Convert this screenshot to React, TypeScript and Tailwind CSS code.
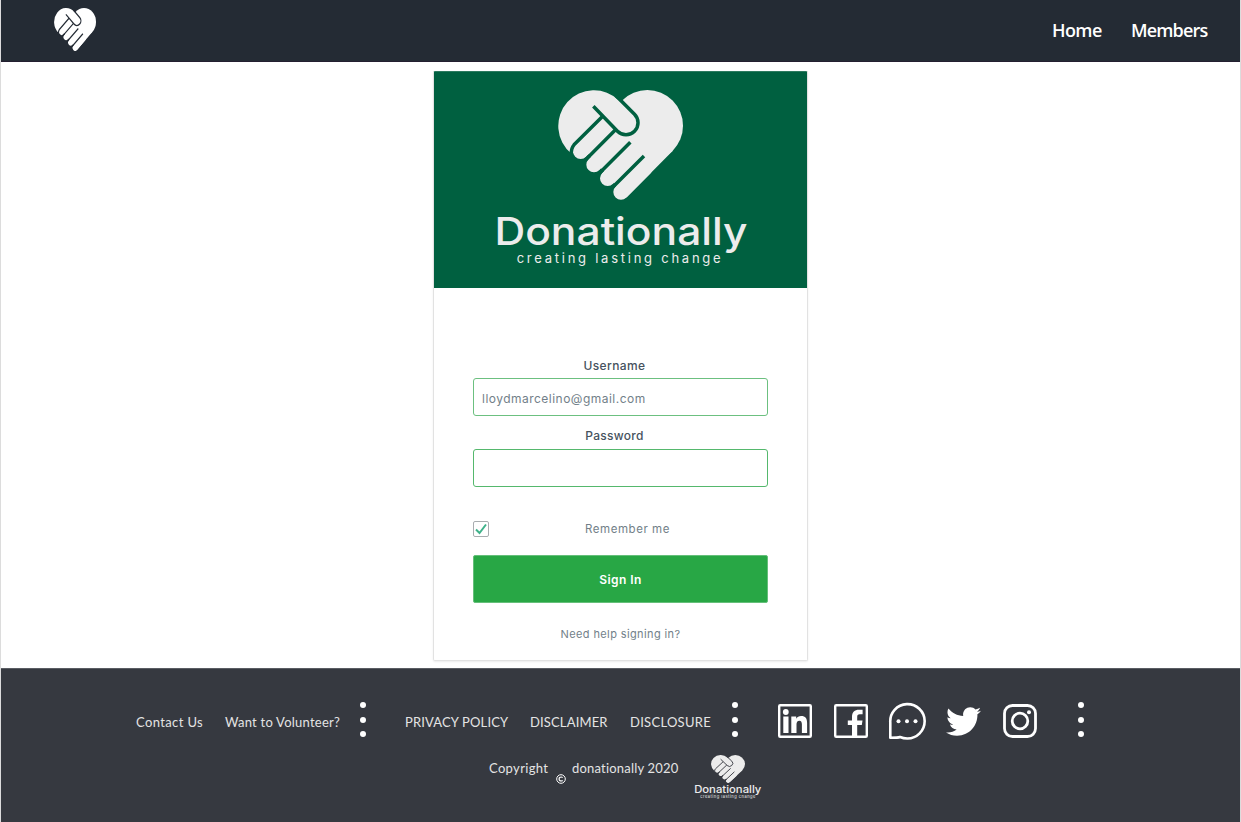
import React from "react";
import { FaTwitter } from "react-icons/fa";

function HeartHands({ className, cut }: { className: string; cut: string }) {
  return (
    <svg viewBox="39 30 375 330" className={className} preserveAspectRatio="none">
      <g fill="currentColor">
        <path d="M79 220.500A107 107 0 1 1 221.700 61.300L240 180L150 230L107 214Z" />
        <circle cx="307" cy="137" r="107" />
        <path d="M221.7 61.3L300 140L382.7 212.7L244.5 352.5L200 300L135 228L150 100Z" />
      </g>
      <g stroke="currentColor" strokeWidth="46" strokeLinecap="round" fill="none">
        <path d="M107 214L170 151M147 254L215 186M188 295L260 223M228 336L300 264" />
      </g>
      <g className={cut} strokeWidth="10.5" fill="none">
        <path d="M173 109L87 194.500Q79 203 78.500 222" />
        <path d="M213 148L119 242M256 187L160 283M297 228L200 325" />
        <path d="M145 79L217.500 153.500A36 36 0 0 0 268.500 102.500L214 48" />
      </g>
    </svg>
  );
}

function Dots({ className }: { className: string }) {
  return (
    <div className={`flex flex-col gap-[8.6px] ${className}`}>
      <span className="size-1.5 rounded-full bg-white" />
      <span className="size-1.5 rounded-full bg-white" />
      <span className="size-1.5 rounded-full bg-white" />
    </div>
  );
}

function LinkedIn() {
  return (
    <svg viewBox="0 0 34 34" className="h-[34px] w-[34px]" fill="white">
      <rect x="1.200" y="1.200" width="31.600" height="31.600" rx="1" fill="none" stroke="white" strokeWidth="2.400" />
      <circle cx="7.800" cy="8" r="2.900" />
      <path d="M5.300 12.500h5.200v16.500h-5.200zM13.300 12.500h4.900v2.200c1-1.700 2.700-2.600 4.900-2.600 4.400 0 6 2.600 6 7V29h-5.200v-8.500c0-2.400-.7-3.800-2.500-3.800-2.100 0-2.900 1.500-2.900 3.900V29h-5.200z" />
    </svg>
  );
}

function Facebook() {
  return (
    <svg viewBox="0 0 34 34" className="h-[34px] w-[34px]" fill="white">
      <rect x="1.200" y="1.200" width="31.600" height="31.600" rx="1" fill="none" stroke="white" strokeWidth="2.400" />
      <path d="M18 33V21h-4.200v-4.500h4.200V13c0-4.900 2.600-7.300 7-7.300h3.600v4.500h-2.800c-2.100 0-2.600.9-2.600 2.700v3.600h5.300L27.800 21h-4.600v12z" />
    </svg>
  );
}

function Chat() {
  return (
    <svg viewBox="0 0 38 38" className="h-[38px] w-[38px]" fill="white">
      <path d="M2.300 35.800V20.500A17.200 17.200 0 1 1 19.300 36.500Q15.500 36.500 12 35Q10.500 35.800 2.300 35.800Z" fill="none" stroke="white" strokeWidth="2.600" strokeLinejoin="round" />
      <circle cx="10.500" cy="19.200" r="2" />
      <circle cx="19" cy="19.200" r="2" />
      <circle cx="27.500" cy="19.200" r="2" />
    </svg>
  );
}

function Instagram() {
  return (
    <svg viewBox="0 0 34 34" className="h-[34px] w-[34px]" fill="none" stroke="white" strokeWidth="2.800">
      <rect x="1.500" y="1.500" width="31" height="31" rx="8" />
      <circle cx="17" cy="17" r="7.800" />
      <circle cx="26" cy="8.200" r="2" fill="white" stroke="none" />
    </svg>
  );
}

export default function App() {
  return (
    <div className="flex h-[822px] w-full flex-col overflow-hidden border-x border-[#dcdcdc] bg-white font-['Inter',sans-serif]">
      <header className="flex h-[62px] shrink-0 items-center justify-between border-b border-[#241f30] bg-[#242b34] pr-8 pl-[53px]">
        <HeartHands className="mt-[-3px] h-[43px] w-[42px] text-white" cut="stroke-[#242b34]" />
        <nav className="flex font-['Open_Sans','Noto_Sans',sans-serif] text-[18px] font-semibold text-white">
          <a className="w-[79px] tracking-[-0.600px] whitespace-nowrap">Home</a>
          <a className="w-[77px] tracking-[-0.850px] whitespace-nowrap">Members</a>
        </nav>
      </header>

      <main className="flex h-[606px] shrink-0 justify-center pt-[9px]">
        <section className="flex h-[590px] w-[375px] flex-col rounded-[2px] border border-[#e2e2e2] border-t-[#2c7a5f] shadow-[0_1px_2px_rgba(0,0,0,0.08)]">
          <div className="flex h-[216px] shrink-0 flex-col items-center bg-[#006040] pt-[18px] text-[#ececec]">
            <HeartHands className="h-[110px] w-[125px] shrink-0" cut="stroke-[#006040]" />
            <div className="mt-[12px] h-[38px] scale-x-[1.120] text-[38px] leading-[38px] font-medium whitespace-nowrap">Donationally</div>
            <div className="pr-[1px] text-[13px] leading-[16px] tracking-[2.750px] whitespace-nowrap">creating lasting change</div>
          </div>
          <form className="flex flex-col px-[39px] pt-[69px] text-center text-[#727f89]">
            <label className="h-[21px] pr-3 text-[12px] leading-[18px] font-medium tracking-[0.400px] text-[#46525e]">Username</label>
            <div className="flex h-[38px] items-center rounded-[3px] border border-[#6cc080] px-2 pt-[3px] text-[12px] tracking-[0.480px]">lloydmarcelino@gmail.com</div>
            <label className="mt-[10px] h-[23px] pr-3 text-[12px] leading-[20px] font-medium tracking-[0.300px] text-[#46525e]">Password</label>
            <div className="h-[38px] rounded-[3px] border border-[#55b86d]" />
            <div className="mt-[34px] flex h-4 items-center">
              <span className="flex size-4 shrink-0 items-center justify-center rounded-[2px] border border-[#a9adb0]">
                <svg viewBox="0 0 12 12" className="size-3" fill="none" stroke="#3fb28a" strokeWidth="2"><path d="M1 6.500L4.500 10L11 1.500" /></svg>
              </span>
              <span className="flex-1 pt-[2px] text-[11.500px] tracking-[0.550px]"><span className="pr-0.5">Remember me</span></span>
            </div>
            <button type="button" className="mt-[18px] h-[48px] rounded-[2px] border border-[#65bf7a] bg-[#28a745] pt-[2px] text-[12px] font-semibold tracking-[0.400px] text-white">Sign In</button>
            <a className="mt-[23px] text-[11px] leading-[16px] tracking-[0.380px]">Need help signing in?</a>
          </form>
        </section>
      </main>

      <footer className="h-[154px] shrink-0 border-t border-[#5a5d63] bg-[#363940] font-['Lato',sans-serif] text-[13px] text-[#e4e4e4]">
        <div className="mt-[33px] flex h-[38px] items-center pl-[135px] whitespace-nowrap">
          <a className="w-[89px] pt-1 tracking-[0.380px]">Contact Us</a>
          <a className="w-[135px] pt-1 tracking-[0.240px]">Want to Volunteer?</a>
          <Dots className="w-[45px] pb-[3px]" />
          <a className="w-[125px] pt-1 tracking-[0.150px]">PRIVACY POLICY</a>
          <a className="w-[100px] pt-1 tracking-[0.150px]">DISCLAIMER</a>
          <a className="w-[102px] pt-1 tracking-[0.280px]">DISCLOSURE</a>
          <Dots className="w-[46px] pb-[3px]" />
          <div className="flex w-[300px] items-center">
            <span className="w-14"><LinkedIn /></span>
            <span className="w-[54px]"><Facebook /></span>
            <span className="w-[58px]"><Chat /></span>
            <span className="w-[57px]"><FaTwitter className="size-[35px] text-white" /></span>
            <Instagram />
          </div>
          <Dots className="pb-[3px]" />
        </div>
        <div className="mt-[15px] flex pl-[488px] whitespace-nowrap">
          <span className="w-[67px] leading-[26px] tracking-[0.350px]">Copyright</span>
          <svg viewBox="0 0 10 10" className="mt-[19px] mr-[6px] size-[10px]" fill="none" stroke="white">
            <circle cx="5" cy="5" r="4.300" />
            <path d="M6.600 3.700A2 2 0 1 0 6.600 6.300" strokeWidth="1.200" />
          </svg>
          <span className="w-[123px] leading-[26px] tracking-[0.200px]">donationally 2020</span>
          <div className="flex w-[66px] flex-col items-center font-['Inter',sans-serif] text-[#ececec]">
            <HeartHands className="h-[28px] w-[34px] shrink-0" cut="stroke-[#363940]" />
            <span className="scale-x-[1.130] text-[10px] leading-[12px] font-medium">Donationally</span>
            <span className="text-[4px] leading-[3px] tracking-[0.500px]">creating lasting change</span>
          </div>
        </div>
      </footer>
    </div>
  );
}
